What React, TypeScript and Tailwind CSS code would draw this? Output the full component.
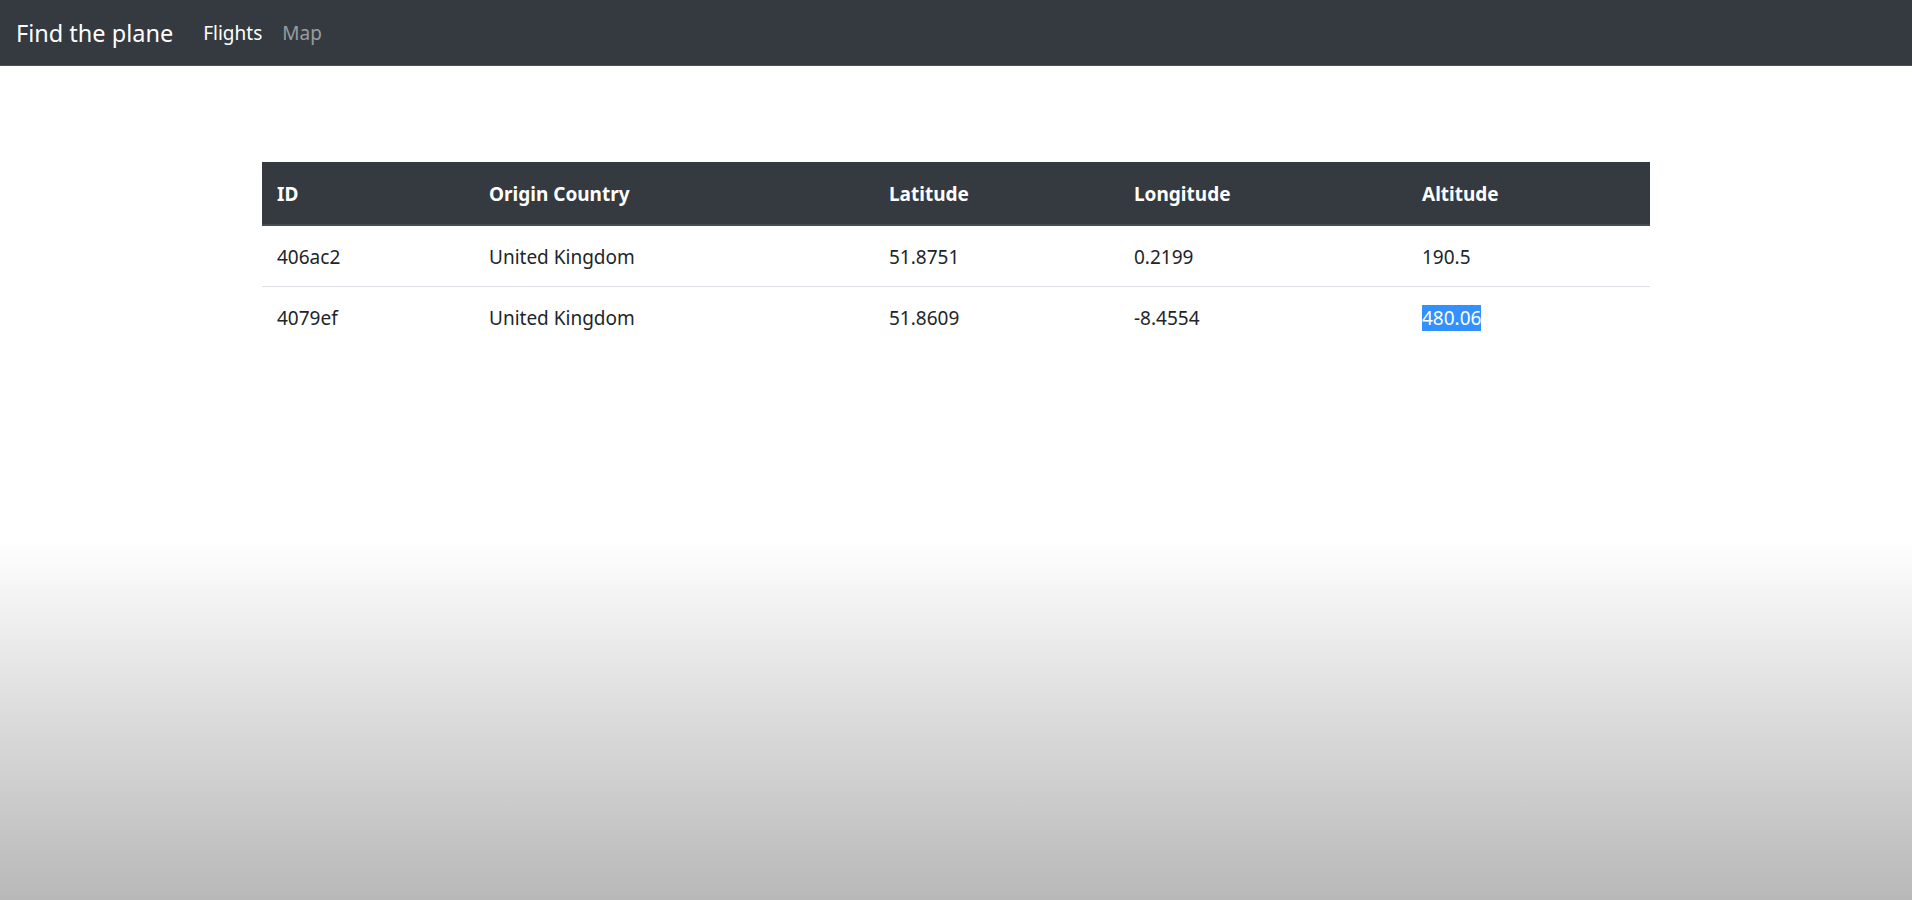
import * as React from "react";

interface Flight {
  id: string;
  country: string;
  lat: string;
  lon: string;
  alt: string;
}

const flights: Flight[] = [
  { id: "406ac2", country: "United Kingdom", lat: "51.8751", lon: "0.2199", alt: "190.5" },
  { id: "4079ef", country: "United Kingdom", lat: "51.8609", lon: "-8.4554", alt: "480.06" },
];

const columns = [
  { label: "ID", width: "w-[212px]" },
  { label: "Origin Country", width: "w-[400px]" },
  { label: "Latitude", width: "w-[245px]" },
  { label: "Longitude", width: "w-[288px]" },
  { label: "Altitude", width: "w-[243px]" },
];

function Navbar() {
  return (
    <nav className="h-[66px] bg-[#343a40] border-b border-[#4b5057] flex items-center px-4 pt-[2px]">
      <span className="text-[23.5px] text-white mr-[30px] leading-none">Find the plane</span>
      <div className="flex items-center gap-[20px] text-[19px] leading-none">
        <span className="text-white">Flights</span>
        <span className="text-white/50">Map</span>
      </div>
    </nav>
  );
}

export default function App() {
  return (
    <div
      className="h-[900px] w-full bg-linear-to-b from-white from-60% to-[#b8b8b8] text-[#212529]"
      style={{ fontFamily: '"Noto Sans", "Open Sans", Arial, sans-serif' }}
    >
      <Navbar />
      <div className="w-[1388px] mx-auto mt-[96px]">
        <table className="w-full table-fixed border-collapse text-[19px] leading-[30px]">
          <thead>
            <tr className="bg-[#343a40] text-white">
              {columns.map((c) => (
                <th
                  key={c.label}
                  className={`${c.width} text-left font-bold px-[15px] pt-[17px] pb-[15px] border-b-2 border-[#454d55]`}
                >
                  {c.label}
                </th>
              ))}
            </tr>
          </thead>
          <tbody>
            {flights.map((f, i) => (
              <tr key={f.id} className={i > 0 ? "border-t border-[#dee2e6]" : ""}>
                <td className="px-[15px] pt-[16px] pb-[14px]">{f.id}</td>
                <td className="px-[15px] pt-[16px] pb-[14px]">{f.country}</td>
                <td className="px-[15px] pt-[16px] pb-[14px]">{f.lat}</td>
                <td className="px-[15px] pt-[16px] pb-[14px]">{f.lon}</td>
                <td className="px-[15px] pt-[16px] pb-[14px]">
                  {i === 1 ? (
                    <span className="bg-[#3390ff] text-white">{f.alt}</span>
                  ) : (
                    f.alt
                  )}
                </td>
              </tr>
            ))}
          </tbody>
        </table>
      </div>
    </div>
  );
}
